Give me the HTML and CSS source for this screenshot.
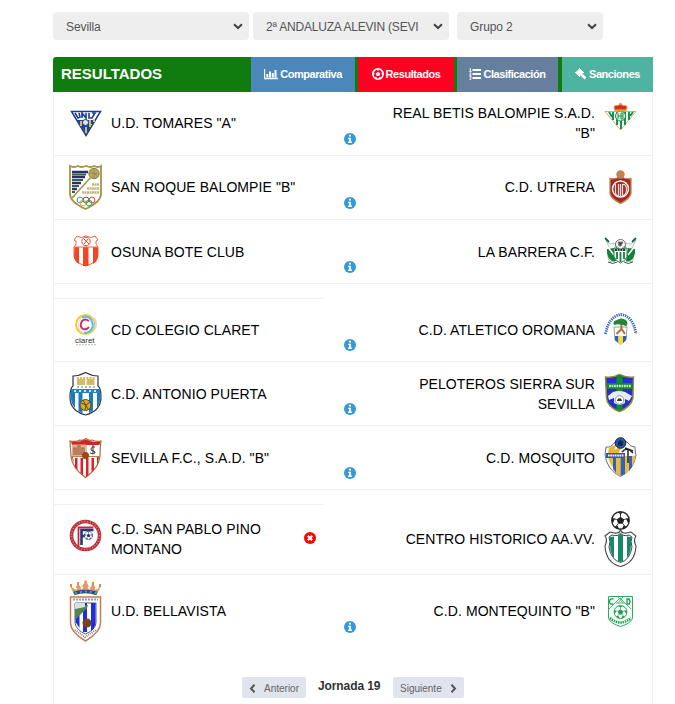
FILE: index.html
```html
<!DOCTYPE html>
<html lang="es">
<head>
    <meta charset="UTF-8">
    <meta name="viewport" content="width=device-width, initial-scale=1.0">
    <title>Resultados</title>
    <link rel="stylesheet" href="styles.css">
</head>
<body>

<!-- Iconos reutilizables -->
<svg class="defs" width="0" height="0">
    <symbol id="chevron" viewBox="0 0 10 7"><path d="M1 1.2L5 5L9 1.2" fill="none" stroke="#444" stroke-width="2"/></symbol>
    <symbol id="info" viewBox="0 0 12 12">
        <circle cx="6" cy="6" r="6" fill="#3498db"/>
        <path d="M5 1.8h2v1.8H5zM4.2 4.7H7v3.8h.9V10H4.1V8.5H5V6.1h-.8z" fill="#fff"/>
    </symbol>
    <symbol id="error" viewBox="0 0 12 12">
        <circle cx="6" cy="6" r="6" fill="#f00"/>
        <path d="M3.8 3.8l4.4 4.400M8.200 3.800L3.800 8.200" stroke="#fff" stroke-width="2.200"/>
    </symbol>
    <symbol id="ball" viewBox="0 0 20 20">
        <circle cx="10" cy="10" r="9.2" fill="#fff" stroke="currentColor" stroke-width="1.4"/>
        <path d="M10 6l4 3-1.500 4.500h-5L6 9zM7 1.300h6L10 3.500zM1 7l3 1.500-2 4.500L.8 11zM19 7l-3 1.500 2 4.500 1.200-2zM4 16l3-.5 1.500 3.500-2-.5zM16 16l-3-.5-1.500 3.500 2-.5z" fill="currentColor"/>
        <path d="M10 6V3M14 9l3-1M12.500 13.500l2 2.500M7.500 13.500l-2 2.500M6 9L3 8" stroke="currentColor"/>
    </symbol>
</svg>

<div class="container">
    <!-- Filtros -->
    <div class="filters">
        <div class="select"><span>Sevilla</span><svg class="arrow"><use href="#chevron"/></svg></div>
        <div class="select"><span>2ª ANDALUZA ALEVIN (SEVI</span><svg class="arrow"><use href="#chevron"/></svg></div>
        <div class="select group"><span>Grupo 2</span><svg class="arrow"><use href="#chevron"/></svg></div>
    </div>

    <!-- Cabecera con pestañas -->
    <div class="header">
        <h1>RESULTADOS</h1>
        <a class="tab comparativa">
            <svg width="14" height="11" viewBox="0 0 14 11"><path d="M.5 0v9.500H14" fill="none" stroke="#fff" stroke-width="1.300"/><path d="M2.300 5h2v3.500h-2zM5 2.500h2v6H5zM7.800 4h2v4.500h-2zM10.500 1h2v7.500h-2z" fill="#fff"/></svg>
            <span>Comparativa</span>
        </a>
        <a class="tab resultados">
            <svg width="12" height="12" viewBox="0 0 12 12"><circle cx="6" cy="6" r="5.200" fill="none" stroke="#fff" stroke-width="1.600"/><path d="M6 3.700l2.300 1.700-.9 2.700H4.600L3.700 5.400zM3.500 1h5L6 2.700zM.7 3.500l1.900 1.800L1 8.500zM11.300 3.500L9.400 5.300 11 8.500zM2.300 9.200l2.400-.2.300 2.500zM9.700 9.200L7.300 9 7 11.500z" fill="#fff"/></svg>
            <span>Resultados</span>
        </a>
        <a class="tab clasificacion">
            <svg width="12" height="12" viewBox="0 0 12 12"><path d="M3.500 2H12M3.500 6H12M3.500 10H12" stroke="#fff" stroke-width="1.900"/><path d="M.5 1L1.500.5v3M.3 3.500h2.200M.5 5h1.700L.6 7.300h1.900M.5 8.700h1.700L1.300 10q1.200.2.700 1.300-.8.500-1.600 0" fill="none" stroke="#fff" stroke-width=".9"/></svg>
            <span>Clasificación</span>
        </a>
        <a class="tab sanciones">
            <svg width="12" height="12" viewBox="0 0 12 12"><path d="M4.500.5L8.500 4.500 4.500 8.500.5 4.500z" fill="#fff"/><path d="M6 6l4.500 4.500" stroke="#fff" stroke-width="2.600"/><path d="M4 0l5 5M0 4l5 5" stroke="#fff"/></svg>
            <span>Sanciones</span>
        </a>
    </div>

    <!-- Partidos -->
    <div class="matches">
        <div class="match up">
            <div class="team home">
                <svg class="crest" viewBox="0 0 34 63">
                    <path d="M2.500 19.500h29L17 43.500z" fill="#fff" stroke="#183b96" stroke-width="1.500"/>
                    <path d="M8 28h19l-3 4h-2v4l-5 6z" fill="#1b449f"/>
                    <path d="M12 29v5M17 35v6M21 28v7M25 27v3" stroke="#f4c935" stroke-width="1.800"/>
                    <path d="M6 21l3 5 2-1-1-4M13 26v-5l4 5v-5M20 21v5h3l3-5h-3" fill="none" stroke="#183b96" stroke-width="1.600"/>
                    <circle cx="16.500" cy="30.500" r="3" fill="#dce5ed" stroke="#183b96"/>
                </svg>
                <span class="name">U.D. TOMARES "A"</span>
            </div>
            <div class="status"><svg class="badge"><use href="#info"/></svg></div>
            <div class="team away">
                <span class="name">REAL BETIS BALOMPIE S.A.D. "B"</span>
                <svg class="crest" viewBox="0 0 34 63">
                    <path d="M1 19.500h31L16.500 38z" fill="#fff" stroke="#d2b466"/>
                    <path d="M5 20l3 5M9 20v8M13 20v13M17 20v17M21 20v13M25 20v8M29 20l-3 4" stroke="#16934a" stroke-width="2"/>
                    <circle cx="16.500" cy="24" r="5" fill="#e9f3e3" stroke="#16934a"/>
                    <path d="M14 21v6M17 21v6M14 24h5M17 21h2v6h-2" stroke="#16934a" fill="none"/>
                    <path d="M11 18q-3-5 3-4.500l2.500-2 2.500 2q6-.5 3 4.500z" fill="#d92934" stroke="#dfa52d"/>
                    <path d="M10.500 18.500h12" stroke="#dfa52d" stroke-width="1.500"/><circle cx="16.500" cy="12" r="1.200" fill="#dfa52d"/>
                </svg>
            </div>
        </div>
        <div class="match up">
            <div class="team home">
                <svg class="crest" viewBox="0 0 34 63">
                    <path d="M1 10q4 2 8 0 3 2 8 0 5 2 8 0 4 2 7 0v28q0 8-15.500 15Q1 46 1 38z" fill="#fff" stroke="#a39349" stroke-width="1.800"/>
                    <path d="M3 16h16M3 21h13M3 27h9M3 33h5" stroke="#352b68" stroke-width="2.500"/>
                    <path d="M3 18.500h14M3 24h11M3 30h7M3 36h3" stroke="#256a55" stroke-width="2.200"/>
                    <path d="M3 42L23 20" stroke="#a39349" stroke-width="1.600"/>
                    <circle cx="25" cy="17.500" r="5.200" fill="#b7a765" stroke="#948347"/><path d="M20 17l10 1M25 12v11M21 14l8 7" stroke="#8c7a3e" stroke-width=".5"/>
                    <path d="M23 28.500h7M18 32.500h12M13 36.500h17" stroke="#c0b47a" stroke-width="2.400" stroke-dasharray="2 .5"/>
                    <g fill="none" stroke-width="1"><circle cx="11" cy="44" r="2.900" stroke="#3d8cc5"/><circle cx="17" cy="44" r="2.900" stroke="#555"/><circle cx="23" cy="44" r="2.900" stroke="#d34b4b"/><circle cx="14" cy="47" r="2.900" stroke="#d9b337"/><circle cx="20" cy="47" r="2.900" stroke="#3e9a60"/></g>
                </svg>
                <span class="name">SAN ROQUE BALOMPIE "B"</span>
            </div>
            <div class="status"><svg class="badge"><use href="#info"/></svg></div>
            <div class="team away">
                <span class="name">C.D. UTRERA</span>
                <svg class="crest" viewBox="0 0 34 63">
                    <path d="M6 22.500q5 1 10.500-2 5.500 3 10.500 2v15q-1 5-10.500 10Q7 42.500 6 37.500z" fill="#a12a25" stroke="#c88251" stroke-width="1.300"/>
                    <circle cx="16.500" cy="18.500" r="4.200" fill="#c88251"/>
                    <circle cx="16.500" cy="33" r="8" fill="#a12a25" stroke="#fff" stroke-width="1.400"/>
                    <path d="M11.500 28v8q0 4 3 4V28M18.500 28v12q4-1 4-6.500t-4-5M16.500 28v13" fill="none" stroke="#f6dddb" stroke-width="1.200"/>
                </svg>
            </div>
        </div>
        <div class="match">
            <div class="team home">
                <svg class="crest" viewBox="0 0 34 63">
                    <path d="M5 27q3-3 2-6l-2-1 3-4q4 3 9 0 5 3 9 0l3 4-2 1q-1 3 2 6v9q-2 7-12 10Q6 43 5 36z" fill="#fff" stroke="#ee6542"/>
                    <path d="M5.500 27H10v17q-5-3-5-8zM14 27h5.500v19h-5.500zM24 27h5v9q0 5-5 8z" fill="#f44422"/>
                    <path d="M5 27h24" stroke="#f07150"/><circle cx="17" cy="21.500" r="4.200" fill="none" stroke="#ed4a35"/><path d="M15 19l5 5M19 19l-4 5" stroke="#ed4a35"/>
                </svg>
                <span class="name">OSUNA BOTE CLUB</span>
            </div>
            <div class="status"><svg class="badge"><use href="#info"/></svg></div>
            <div class="team away">
                <span class="name">LA BARRERA C.F.</span>
                <svg class="crest" viewBox="0 0 34 63">
                    <path d="M2 20l4 4 6-1-1 18q-7 3-7-5l2-6zM32 20l-5 4-6-1 1 18q9 3 7-5l-2-6z" fill="#f3f7f2" stroke="#9aaba0" stroke-width=".7"/>
                    <path d="M3 29l7-1 2 13q-7 2-9-8zM31 29l-7-1-2 13q7 2 9-8z" fill="#12833a"/>
                    <path d="M3 26l7 9M31 26l-7 9" stroke="#fff" stroke-width="1.500"/>
                    <circle cx="16.500" cy="24.500" r="5" fill="#fff" stroke="#666"/><path d="M14 22h5l-2 4h-2zM12 26l3 2M21 26l-3 2" fill="#555" stroke="#555" stroke-width=".6"/>
                    <path d="M10 28q6 2 13 0v9q-2 4-6.500 6Q12 41 10 37z" fill="#fff" stroke="#277d42"/>
                    <path d="M13 32v7M16.500 32v10M20 32v7" stroke="#12833a" stroke-width="1.800"/><path d="M11 30h11" stroke="#333" stroke-width="1.800" stroke-dasharray="2 .7"/>
                    <path d="M1 18l4 4M32 18l-4 4" stroke="#08713b" stroke-width="1.800"/><path d="M4 42q5 3 9 0M20 42q4 3 9 0" fill="none" stroke="#315e43"/>
                </svg>
            </div>
        </div>
        <div class="match spaced">
            <div class="team home">
                <svg class="crest" viewBox="0 0 34 62">
                    <g fill="none"><circle cx="16.500" cy="25.500" r="9.500" stroke="#f8c928" stroke-width="1.900"/><path d="M13 18.500q6-2 9 2 3 5 1 9-3 5-8 4" stroke="#4ac2ee" stroke-width="2"/><path d="M12 19q-4 4-3 9 2 5 6 6" stroke="#d7dce0"/><path d="M20 22q-4-3-7 0-3 5 1 8 4 1 6-2" stroke="#db285b" stroke-width="1.900"/><path d="M25 19q4 6 0 12" stroke="#d7d7d7" stroke-width="2"/></g>
                    <text x="6" y="43.500" class="claret">claret</text>
                    <path d="M7 45.700h20" stroke="#bbb" stroke-dasharray="2 1"/>
                </svg>
                <span class="name">CD COLEGIO CLARET</span>
            </div>
            <div class="status"><svg class="badge"><use href="#info"/></svg></div>
            <div class="team away">
                <span class="name">C.D. ATLETICO OROMANA</span>
                <svg class="crest" viewBox="0 0 34 62">
                    <path d="M1.500 35Q5 17 17 15.500 29 17 32 35" fill="none" stroke="#3366b1" stroke-width="2.800" stroke-dasharray="1.300 .9"/>
                    <path d="M10 28h13l-1 13-5.500 4.500L11 41z" fill="#fff" stroke="#7e8791" stroke-width=".8"/>
                    <path d="M11 37h3.500v7L11 41zM19 37h3.500l-.5 4-3 3z" fill="#2c62b4"/><path d="M14.500 37H19v7l-2.500 2-2-2z" fill="#f5dc36"/>
                    <path d="M16.500 22q2 7 0 9l-4 4M17 29l4 6" fill="none" stroke="#ae7139" stroke-width="2"/>
                    <path d="M10 26q-2-4 3-5 4-3 9 0 3 4 0 6-7-3-12-1z" fill="#238535"/>
                </svg>
            </div>
        </div>
        <div class="match">
            <div class="team home">
                <svg class="crest" viewBox="0 0 34 63">
                    <path d="M4 14Q10 14 16.500 10.500 23 14 29 14v10q3 2 3 11 0 14-15.500 18Q1 49 1 35q0-9 3-11z" fill="#fff" stroke="#334" stroke-width="1.200"/>
                    <path d="M2 27h29v4H2z" fill="#2584bd"/><path d="M5 29h24" stroke="#cde5f1" stroke-width="2" stroke-dasharray="2 3"/>
                    <path d="M2 31h4v15q-5-5-4-15zM9.500 31h4v20q-2 0-4-2zM20 31h4v18l-4 2zM28 31h3.500q0 10-3.500 15z" fill="#147bc4"/>
                    <path d="M8 15h2v2h1v-2h2v2h1v-2h2v8H8zM17.500 15h2v2h1v-2h2v2h1v-2h2v8h-8z" fill="#d3b968"/><path d="M8 25h18" stroke="#7baacb" stroke-width="1.500" stroke-dasharray="2 2"/>
                    <circle cx="16.500" cy="43" r="5.500" fill="#d8a92b" stroke="#5d511d"/><path d="M12 41l5 2 4-3M17 43l-1 5M14 38l5 9" fill="none" stroke="#5d511d"/>
                </svg>
                <span class="name">C.D. ANTONIO PUERTA</span>
            </div>
            <div class="status"><svg class="badge"><use href="#info"/></svg></div>
            <div class="team away">
                <span class="name">PELOTEROS SIERRA SUR SEVILLA</span>
                <svg class="crest" viewBox="0 0 34 63">
                    <path d="M1.500 15q8 1 14-2.500Q22 16 29.500 15 29 27 29 36q-2 9-13.500 13.500Q3 45 2.500 36z" fill="#2230cf" stroke="#968d2e" stroke-width="1.500"/>
                    <path d="M12.500 13.500q3-1 6 0V48l-3 1-3-1z" fill="#168b35"/>
                    <path d="M3 21h25.500v6H3z" fill="#16823d"/><path d="M5 24h22" stroke="#c2e5c7" stroke-width="2.400" stroke-dasharray="1.800 .7"/>
                    <path d="M9 30q6-2 12 0l7 4-3 5-4-2v4q-5 3-11 0v-5l-5 2-1-4z" fill="#e8edf4"/><circle cx="15.500" cy="38" r="4.300" fill="#fff" stroke="#99a"/><path d="M14 36.500h3l1 2.500h-5z" fill="#333"/>
                </svg>
            </div>
        </div>
        <div class="match">
            <div class="team home">
                <svg class="crest" viewBox="0 0 34 63">
                    <path d="M1 15q7 1 10-1 3 1 6-1.500Q20 15 23 14q4 2 9 1-1 6-1 15-1 12-14.500 21.500Q3 42 2 30z" fill="#fff" stroke="#aa6e35" stroke-width="1.200"/>
                    <path d="M2 15.500q8 1 14.500-2Q24 17 31.500 15.500l-1 3.500H3z" fill="#d52128"/>
                    <path d="M6 32h2.500v12L6 41zM11.500 32H14v17l-2.500-2zM17 32h2.500v17L17 51zM22.500 32H25v12l-2.500 2zM28 31h2l-2 10zM3 31h1l1 7z" fill="#df2028"/>
                    <path d="M3 18.500h13v11.500H3z" fill="#d9b096"/><path d="M5 29v-7h2v7M9 29v-9h2v9M13 29v-7h2v7" stroke="#a4603f" stroke-width="1.200" fill="none"/>
                    <path d="M2.500 30.500H31M17 18v12" stroke="#bd8446"/><circle cx="16.500" cy="29.500" r="3.500" fill="#934b1c"/><path d="M21 27q5 2 5-1l-4-2q0-4 4-3M24 19v9" fill="none" stroke="#333"/>
                </svg>
                <span class="name">SEVILLA F.C., S.A.D. "B"</span>
            </div>
            <div class="status"><svg class="badge"><use href="#info"/></svg></div>
            <div class="team away">
                <span class="name">C.D. MOSQUITO</span>
                <svg class="crest" viewBox="0 0 34 63">
                    <path d="M2 21q5 1 9-5 6-4 12 0 3 5 8 5 0 6 1 8-2 15-15.500 21.500Q3 44 1 29z" fill="#f8f8f4" stroke="#687080"/>
                    <path d="M4 30h5v11q-4-4-5-11zM12 30h4.500v20q-3-1-4.500-3zM21 30h4v15l-4 3zM28 30h3q0 6-3 10z" fill="#e9bd3b"/>
                    <path d="M9 30h3v17l-3-4zM16.500 30H21v18l-4.500 2zM25 30h3v11l-3 4z" fill="#385fb5"/>
                    <path d="M5 22l8-4-3 6 7-3-2 6H4z" fill="#e6b72b"/><path d="M18 26q5-6 11 1M21 22l8 3M24 24v13" fill="none" stroke="#252a30" stroke-width="1.500"/>
                    <circle cx="16.500" cy="17" r="5.300" fill="#245bb2" stroke="#172644"/><path d="M16.500 14l3 2-1 4h-4l-1-4z" fill="#172644"/>
                    <path d="M2 27h19v5H2z" fill="#315ba8"/><path d="M4 29.500h16" stroke="#fff" stroke-width="2" stroke-dasharray="1.600 .7"/>
                </svg>
            </div>
        </div>
        <div class="match spaced tall up">
            <div class="team home">
                <svg class="crest" viewBox="0 0 34 69">
                    <circle cx="16.500" cy="30.500" r="14" fill="#fff" stroke="#ba3138" stroke-width="3.600"/>
                    <circle cx="16.500" cy="30.500" r="14" fill="none" stroke="#dd8c90" stroke-width="1.400" stroke-dasharray="1 1.800"/>
                    <path d="M9.500 41V22.500h15" fill="none" stroke="#bd2938" stroke-width="1.800"/><path d="M12.500 40V25h12M12 31h5" fill="none" stroke="#263878" stroke-width="2.600"/>
                    <use href="#ball" x="15" y="26" width="9" height="9" color="#263878"/>
                </svg>
                <span class="name">C.D. SAN PABLO PINO MONTANO</span>
                <svg class="badge error"><use href="#error"/></svg>
            </div>
            <div class="status"></div>
            <div class="team away">
                <span class="name">CENTRO HISTORICO AA.VV.</span>
                <svg class="crest" viewBox="0 0 34 69">
                    <use href="#ball" x="7" y="6" width="19" height="19" color="#222"/>
                    <path d="M1 31l5-4q9 3 10.500-2Q18 30 27 27l5 4q-3 4 0 10-1 17-15.500 20.500Q2 58 1 41q3-6 0-10z" fill="#fff" stroke="#444" stroke-width="1.100"/>
                    <path d="M5 32l3-2q6 2 8.500-2Q19 32 25 30l3 2q-2 4 0 10-2 13-11.500 15.500Q7 55 5 42q2-6 0-10z" fill="#fff" stroke="#444"/>
                    <path d="M6 32l4-.5V53q-5-5-4-21zM14 30.500l2.500-2 2.500 2V56l-2.500 1-2.500-1zM23 31.500l4 .5q1 16-4 21z" fill="#16886a"/>
                </svg>
            </div>
        </div>
        <div class="match last up">
            <div class="team home">
                <svg class="crest" viewBox="0 0 34 73">
                    <path d="M5 19L1 11l5 3 3-6 3 5 4.500-7 4.500 7 3-5 3 6 5-3-4 8q-11-5-23 0z" fill="#df9d5a"/><path d="M2 12v-3M9 10V7M16.500 8V5.500M24 10V7M31 12V9" stroke="#dc8f42" stroke-width="2"/>
                    <path d="M5 13l3 1M12 14l2-2M19 12l2 2M26 14l3-1" stroke="#fff" stroke-width="1.500"/>
                    <path d="M5 18.500q11-4 23 0" fill="none" stroke="#304594" stroke-width="3.500"/><path d="M6 18.500q11-4 22 0" fill="none" stroke="#48b37c" stroke-width="2" stroke-dasharray="2 3"/>
                    <path d="M1.500 22h30v26q0 9-15 18Q1.500 57 1.500 48z" fill="#fff" stroke="#c47d4e" stroke-width="1.500"/>
                    <path d="M6 28h21v20q-1 7-10.500 11Q7 55 6 48z" fill="#fff" stroke="#555b90"/><path d="M6.500 36h4v17l-4-6zM14 28h4v29h-4zM22 28h4.500v20q0 5-4.500 8z" fill="#202fda"/>
                    <path d="M6 33l13-3-1 3-12 12z" fill="#58824b"/><path d="M6 28h10v4l-10 2z" fill="#dde1dc"/><path d="M4 24.500h25" stroke="#999" stroke-width="2" stroke-dasharray="2 1"/>
                    <circle cx="18" cy="48" r="4.500" fill="#744422"/><path d="M6 55l10 7 11-7" fill="none" stroke="#888" stroke-width="2" stroke-dasharray="1 1"/>
                </svg>
                <span class="name">U.D. BELLAVISTA</span>
            </div>
            <div class="status"><svg class="badge"><use href="#info"/></svg></div>
            <div class="team away">
                <span class="name">C.D. MONTEQUINTO "B"</span>
                <svg class="crest" viewBox="0 0 34 73">
                    <path d="M4.500 21.500h24v22q-2 5-12 8-10-3-12-8z" fill="#f5fff7" stroke="#35a961"/>
                    <path d="M5 34l11-11 11 11M12 28h9M14 22l5 6M19 22l-5 6" fill="none" stroke="#58b67a"/>
                    <path d="M9.500 24q-4-1-4 2.500t4 2.500M23 24v5h2q2-2.500 0-5z" fill="none" stroke="#229c50" stroke-width="1.300"/>
                    <use href="#ball" x="9.500" y="30" width="14" height="14" color="#229c50"/><path d="M6 43q10 9 21 0" fill="none" stroke="#229c50" stroke-width="2.500" stroke-dasharray="1.500 .8"/>
                </svg>
            </div>
        </div>

        <!-- Paginación -->
        <div class="pagination">
            <a class="page-button"><svg width="7" height="9" viewBox="0 0 7 9"><path d="M5.500.8L2 4.500l3.500 3.700" fill="none" stroke="#555" stroke-width="2"/></svg>Anterior</a>
            <strong>Jornada 19</strong>
            <a class="page-button next">Siguiente<svg width="7" height="9" viewBox="0 0 7 9"><path d="M1.500.8L5 4.500 1.500 8.200" fill="none" stroke="#555" stroke-width="2"/></svg></a>
        </div>
    </div>
</div>

</body>
</html>
```
FILE: styles.css
```css
* {
    box-sizing: border-box;
}
body {
    font-family: "Liberation Sans", Arial, sans-serif;
    margin: 0;
    height: 704px;
    overflow: hidden;
    background-color: #fff;
    color: #000;
}
svg {
    display: block;
    flex-shrink: 0;
}
.defs {
    position: absolute;
}
.container {
    width: 600px;
    height: 704px;
    margin-left: 53px;
    padding-top: 12px;
    display: flex;
    flex-direction: column;
}
.filters {
    display: flex;
    gap: 4px;
    margin-bottom: 17px;
}
.select {
    display: flex;
    align-items: center;
    justify-content: space-between;
    width: 196px;
    height: 28px;
    padding: 1px 6px 0 13px;
    border-radius: 4px;
    background-color: #eee;
    color: #555;
    font-size: 12px;
    letter-spacing: -0.1px;
    white-space: nowrap;
}
.select:nth-child(2) {
    letter-spacing: -0.2px;
}
.select.group {
    width: 146px;
    margin-left: 4px;
}
.arrow {
    width: 10px;
    height: 7px;
}
.header {
    display: flex;
    height: 35px;
    background-color: #107c10;
    border-radius: 3px 0 0 0;
    color: #fff;
}
.header h1 {
    width: 198px;
    margin: 0;
    padding-left: 8px;
    font-size: 15px;
    line-height: 34px;
}
.tab {
    display: flex;
    align-items: center;
    justify-content: center;
    gap: 2px;
    padding-bottom: 1px;
    font-size: 11px;
    font-weight: bold;
    letter-spacing: -0.45px;
}
.comparativa {
    width: 104px;
    background-color: #4b87ba;
}
.resultados {
    width: 96px;
    margin-left: 3px;
    background-color: #ff0021;
}
.clasificacion {
    width: 101px;
    margin-left: 3px;
    background-color: #677f9f;
}
.sanciones {
    width: 91px;
    margin-left: 4px;
    background-color: #4fb3a2;
}
.matches {
    flex: 1;
    border-left: 1px solid #f0f0f0;
    border-right: 1px solid #f0f0f0;
}
.match {
    display: grid;
    grid-template-columns: 269px 54px 275px;
    height: 64px;
    border-bottom: 1px solid #f0f0f0;
}
.match.spaced {
    height: 78px;
}
.match.tall {
    height: 85px;
}
.match.last {
    height: 73px;
    border-bottom: none;
}
.spaced .team,
.spaced .status {
    margin-top: 14px;
    border-top: 1px solid transparent;
}
.spaced .home {
    border-top-color: #f0f0f0;
}
.team {
    display: flex;
    align-items: center;
}
.home {
    padding-left: 15px;
}
.away {
    justify-content: flex-end;
    padding-right: 14px;
    text-align: right;
}
.crest {
    width: 34px;
    height: 100%;
}
.name {
    max-width: 210px;
    font-size: 14px;
    line-height: 20px;
    letter-spacing: 0.08px;
}
.up .name {
    padding-bottom: 2px;
}
.home .name {
    max-width: 190px;
    margin-left: 8px;
}
.away .name {
    margin-right: 9px;
}
.status {
    display: flex;
    justify-content: center;
    padding-top: 41px;
}
.spaced .status {
    padding-top: 40px;
}
.last .status {
    padding-top: 46px;
}
.badge {
    width: 12px;
    height: 12px;
}
.badge.error {
    margin: 0 7px 3px auto;
}
.claret {
    font-size: 8px;
    fill: #333;
}
.pagination {
    display: flex;
    align-items: center;
    margin: 29px 0 0 188px;
    font-size: 12px;
    color: #333;
}
.pagination strong {
    margin: 0 12px 3px;
    width: 63px;
    letter-spacing: -0.1px;
    white-space: nowrap;
}
.page-button {
    display: flex;
    align-items: center;
    justify-content: space-between;
    width: 64px;
    height: 21px;
    padding: 1px 7px 0;
    border-radius: 2px;
    background-color: #e0e4ec;
    color: #666;
    font-size: 10px;
}
.page-button.next {
    width: 71px;
}
```
